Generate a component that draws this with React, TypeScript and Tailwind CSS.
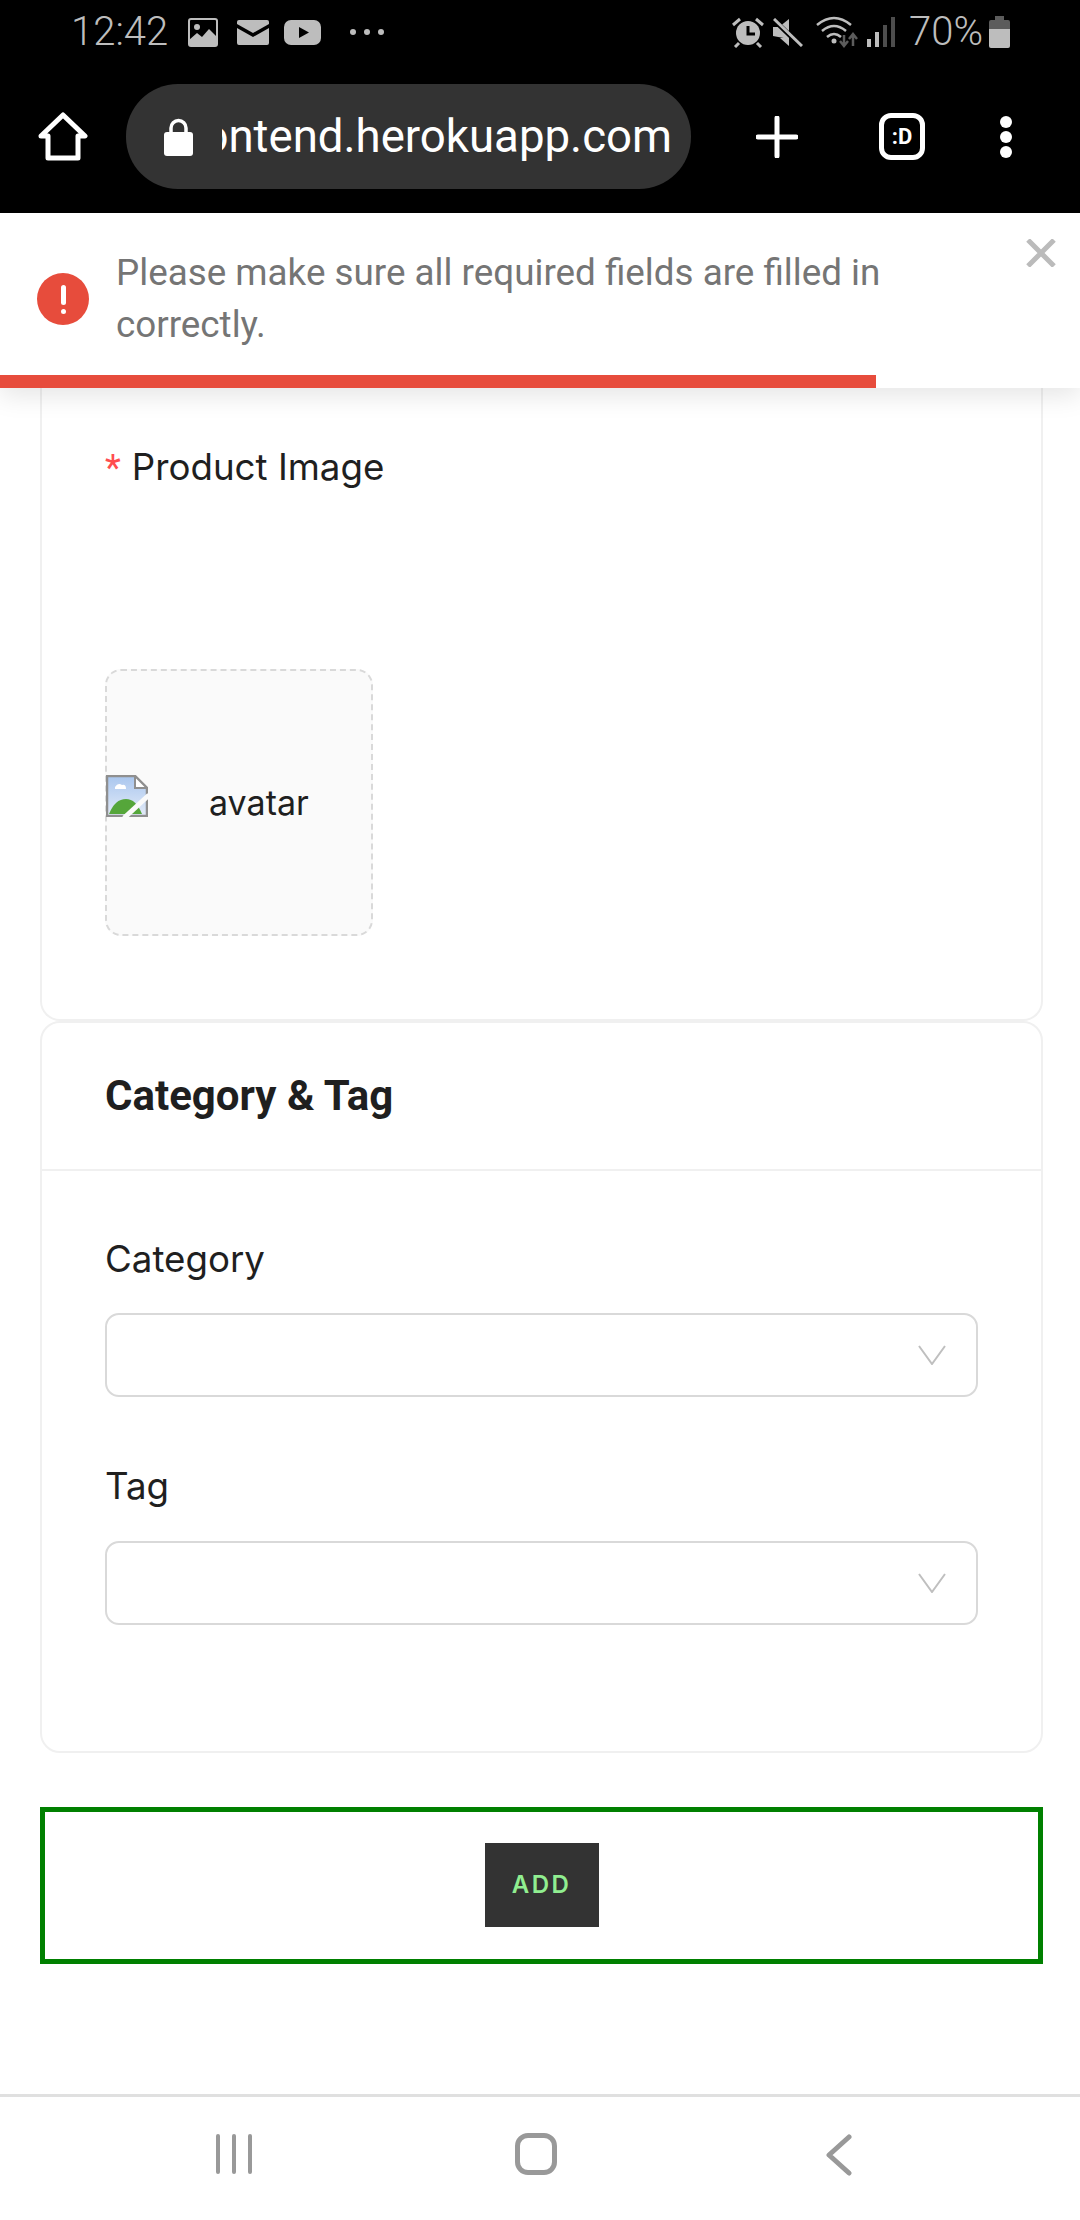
import React from 'react';

const SelectBox = () => (
    <div className="h-[84px] rounded-[14px] border-2 border-[#d9d9d9] bg-white flex items-center justify-end pr-[29px]">
        <svg width="30" height="20" viewBox="0 0 30 20" fill="none" stroke="#bfbfbf" strokeWidth="2">
            <path d="M2 1 L15 19 L28 1" />
        </svg>
    </div>
);

const StatusBar = () => (
    <div className="h-[64px] flex items-center pl-[71px] text-[#bdbdbd] font-['Roboto',sans-serif] font-light">
        <span className="text-[40px] leading-none w-[117px]">12:42</span>
        <svg width="30" height="29" viewBox="0 0 30 29" className="mr-[19px]">
            <rect x="1" y="1" width="28" height="27" rx="2" fill="none" stroke="#bdbdbd" strokeWidth="2" />
            <circle cx="9" cy="9" r="3" fill="#bdbdbd" />
            <path d="M1 28 V22 L9 15 L14 19 L21 11 L29 19 V28 Z" fill="#bdbdbd" />
        </svg>
        <svg width="32" height="25" viewBox="0 0 32 25" className="mr-[15px]">
            <path d="M0 2 Q0 0 2 0 H30 Q32 0 32 2 V4 L16 13 L0 4 Z" fill="#bdbdbd" />
            <path d="M0 8 L16 17 L32 8 V23 Q32 25 30 25 H2 Q0 25 0 23 Z" fill="#bdbdbd" />
        </svg>
        <svg width="37" height="25" viewBox="0 0 37 25" className="mr-[29px]">
            <rect width="37" height="25" rx="7" fill="#bdbdbd" />
            <path d="M15 7 L25 12.5 L15 18 Z" fill="#000" />
        </svg>
        <div className="flex gap-[8px]">
            <span className="w-[6px] h-[6px] rounded-full bg-[#bdbdbd]" />
            <span className="w-[6px] h-[6px] rounded-full bg-[#bdbdbd]" />
            <span className="w-[6px] h-[6px] rounded-full bg-[#bdbdbd]" />
        </div>
        <div className="flex-1" />
        <svg width="32" height="32" viewBox="0 0 32 32" className="mr-[9px]" fill="none" stroke="#bdbdbd">
            <circle cx="16" cy="17" r="12" fill="#bdbdbd" stroke="none" />
            <path d="M16 10 V18 H23" stroke="#000" strokeWidth="3" />
            <path d="M1 9 L8 3 M31 9 L24 3 M7 27 L3 31 M25 27 L29 31" strokeWidth="3" />
        </svg>
        <svg width="30" height="29" viewBox="0 0 30 29" className="mr-[13px]">
            <path d="M0 9 H6 L16 1 V21 L0 18 Z" fill="#bdbdbd" />
            <path d="M1 2 L28 28" stroke="#000" strokeWidth="5" />
            <path d="M1 1 L29 28" stroke="#bdbdbd" strokeWidth="3" />
            <path d="M7 20 L16 28 V20 Z" fill="#bdbdbd" />
        </svg>
        <svg width="42" height="32" viewBox="0 0 42 32" className="mr-[9px]" fill="none" stroke="#bdbdbd" strokeWidth="2.5">
            <path d="M1 9 Q18 -5 35 9" />
            <path d="M6 15 Q18 5 30 15" />
            <path d="M11 21 Q18 15 25 21" />
            <circle cx="18" cy="25" r="2.5" fill="#bdbdbd" stroke="none" />
            <path d="M28 19 V29 M24 25 L28 30 L32 25" stroke="#5c5c5c" />
            <path d="M37 30 V19 M33 23 L37 18 L41 23" stroke="#5c5c5c" />
        </svg>
        <svg width="28" height="30" viewBox="0 0 28 30" className="mr-[14px]">
            <rect x="0" y="22" width="4" height="8" fill="#bdbdbd" />
            <rect x="8" y="15" width="4" height="15" fill="#bdbdbd" />
            <rect x="16" y="8" width="4" height="22" fill="#4d4d4d" />
            <rect x="24" y="0" width="4" height="30" fill="#4d4d4d" />
        </svg>
        <span className="text-[40px] leading-none w-[80px]">70%</span>
        <svg width="21" height="32" viewBox="0 0 21 32" className="mr-[70px]">
            <path d="M6 0 H15 V4 H19 Q21 4 21 6 V13 H0 V6 Q0 4 2 4 H6 Z" fill="#5c5c5c" />
            <path d="M0 13 H21 V30 Q21 32 19 32 H2 Q0 32 0 30 Z" fill="#bdbdbd" />
        </svg>
    </div>
);

const BrowserBar = () => (
    <div className="h-[149px] flex items-center pb-[4px] text-white font-['Roboto',sans-serif]">
        <svg width="50" height="49" viewBox="0 0 50 49" className="ml-[38px]" fill="none" stroke="#fff" strokeWidth="5" strokeLinejoin="round">
            <path d="M25 3 L47 24 H40 V46 H10 V24 H3 Z" />
        </svg>
        <div className="ml-[38px] w-[565px] h-[105px] rounded-[52px] bg-[#333333] flex items-center pl-[38px]">
            <svg width="29" height="38" viewBox="0 0 29 38" className="shrink-0">
                <path d="M7 15 V10 A7.5 7.5 0 0 1 22 10 V15" fill="none" stroke="#fff" strokeWidth="3.5" />
                <rect y="14" width="29" height="24" rx="3" fill="#fff" />
            </svg>
            <div className="ml-[29px] w-[450px] overflow-hidden flex justify-end">
                <span className="text-[45.6px] leading-[60px] whitespace-nowrap">frontend.herokuapp.com</span>
            </div>
        </div>
        <svg width="42" height="42" viewBox="0 0 42 42" className="ml-[65px]" stroke="#fff" strokeWidth="5" strokeLinecap="round">
            <path d="M21 2 V40 M2 21 H40" />
        </svg>
        <div className="ml-[81px] w-[46px] h-[47px] rounded-[12px] border-[5px] border-white flex items-center justify-center text-[22px] font-bold leading-none">:D</div>
        <div className="ml-[75px] flex flex-col gap-[3px]">
            <span className="w-[12px] h-[12px] rounded-full bg-white" />
            <span className="w-[12px] h-[12px] rounded-full bg-white" />
            <span className="w-[12px] h-[12px] rounded-full bg-white" />
        </div>
    </div>
);

const Toast = () => (
    <div className="relative z-10 h-[175px] bg-white shadow-[0_8px_24px_rgba(0,0,0,0.1)] font-['Roboto',sans-serif]">
        <div className="flex items-start pl-[37px] pt-[34px]">
            <div className="mt-[26px] w-[52px] h-[52px] rounded-full bg-[#e74c3c] flex flex-col items-center justify-center gap-[4px]">
                <span className="w-[5px] h-[20px] rounded-full bg-white" />
                <span className="w-[5px] h-[5px] rounded-full bg-white" />
            </div>
            <p className="ml-[27px] w-[800px] text-[36.8px] leading-[52px] text-[#757575]">Please make sure all required fields are filled in correctly.</p>
        </div>
        <svg width="30" height="28" viewBox="0 0 30 28" className="absolute left-[1026px] top-[26px]" stroke="#bbbbbb" strokeWidth="5">
            <path d="M2 1 L28 27 M28 1 L2 27" />
        </svg>
        <div className="absolute left-0 bottom-0 w-[876px] h-[13px] bg-[#e74c3c]" />
    </div>
);

const BrokenImage = () => (
    <svg width="42" height="42" viewBox="0 0 42 42" className="shrink-0 -ml-[1px] -mt-[14px]">
        <defs>
            <linearGradient id="sky" x1="0" y1="0" x2="0" y2="1">
                <stop offset="0" stopColor="#a9c6ee" />
                <stop offset="1" stopColor="#e3ebf8" />
            </linearGradient>
        </defs>
        <path d="M1 1 H29 L41 13 V41 H1 Z" fill="url(#sky)" stroke="#8f8f8f" strokeWidth="2.5" />
        <path d="M29 1 V13 H41 Z" fill="#fff" stroke="#8f8f8f" strokeWidth="2" />
        <path d="M9 12 Q12 7 16 10 Q20 9 20 14 H9 Z" fill="#fff" />
        <path d="M3 39 Q9 24 20 24 Q30 24 36 39 Z" fill="#55a63a" />
        <path d="M18 43 L43 20" stroke="#fafafa" strokeWidth="5" />
    </svg>
);

export default function App() {
    return (
        <div className="w-[1080px] h-[2220px] bg-white flex flex-col overflow-hidden">
            <div className="bg-black">
                <StatusBar />
                <BrowserBar />
            </div>
            <Toast />

            <div className="flex-1 pl-[40px] pr-[37px] font-['Inter',sans-serif] text-[#1f1f1f]">
                {/* product image card, its top is under the toast */}
                <div className="h-[633px] rounded-b-[20px] border-2 border-t-0 border-[#f0f0f0] pl-[63px] pt-[48px]">
                    <div className="text-[36.7px] leading-[62px]">
                        <span className="text-[#ff4d4f] mr-[11px] font-['Roboto',sans-serif]">*</span>Product Image
                    </div>
                    <div className="mt-[170px] w-[268px] h-[267px] rounded-[16px] border-2 border-dashed border-[#d9d9d9] bg-[#fafafa] flex items-center text-[34px]">
                        <BrokenImage />
                        <span className="ml-[61px]">avatar</span>
                    </div>
                </div>

                <div className="h-[732px] rounded-[20px] border-2 border-[#f0f0f0]">
                    <div className="h-[148px] border-b-2 border-[#f0f0f0] pl-[63px] pt-[48px] font-['Roboto',sans-serif] font-bold text-[42px] leading-[50px]">Category &amp; Tag</div>
                    <div className="px-[63px] pt-[57px]">
                        <div className="text-[36.7px] leading-[62px] mb-[23px]">Category</div>
                        <SelectBox />
                        <div className="text-[36.7px] leading-[62px] mt-[58px] mb-[24px]">Tag</div>
                        <SelectBox />
                    </div>
                </div>

                <div className="mt-[54px] h-[157px] border-[5px] border-[#008000] flex justify-center pt-[31px]">
                    <div className="w-[114px] h-[84px] bg-[#333333] text-[#90ee90] flex items-center justify-center text-[24px] font-semibold tracking-[2.5px]">ADD</div>
                </div>
            </div>

            <div className="h-[126px] border-t-[3px] border-[#e0e0e0] relative flex items-start pt-[37px]">
                <div className="ml-[216px] flex gap-[12px]">
                    <span className="w-[4px] h-[40px] rounded-full bg-[#999999]" />
                    <span className="w-[4px] h-[40px] rounded-full bg-[#999999]" />
                    <span className="w-[4px] h-[40px] rounded-full bg-[#999999]" />
                </div>
                <div className="ml-[263px] -mt-[1px] w-[42px] h-[42px] rounded-[13px] border-[5px] border-[#999999]" />
                <svg width="26" height="42" viewBox="0 0 26 42" className="ml-[269px]" fill="none" stroke="#999999" strokeWidth="5" strokeLinecap="round" strokeLinejoin="round">
                    <path d="M23 3 L3 21 L23 39" />
                </svg>
            </div>
        </div>
    );
}
